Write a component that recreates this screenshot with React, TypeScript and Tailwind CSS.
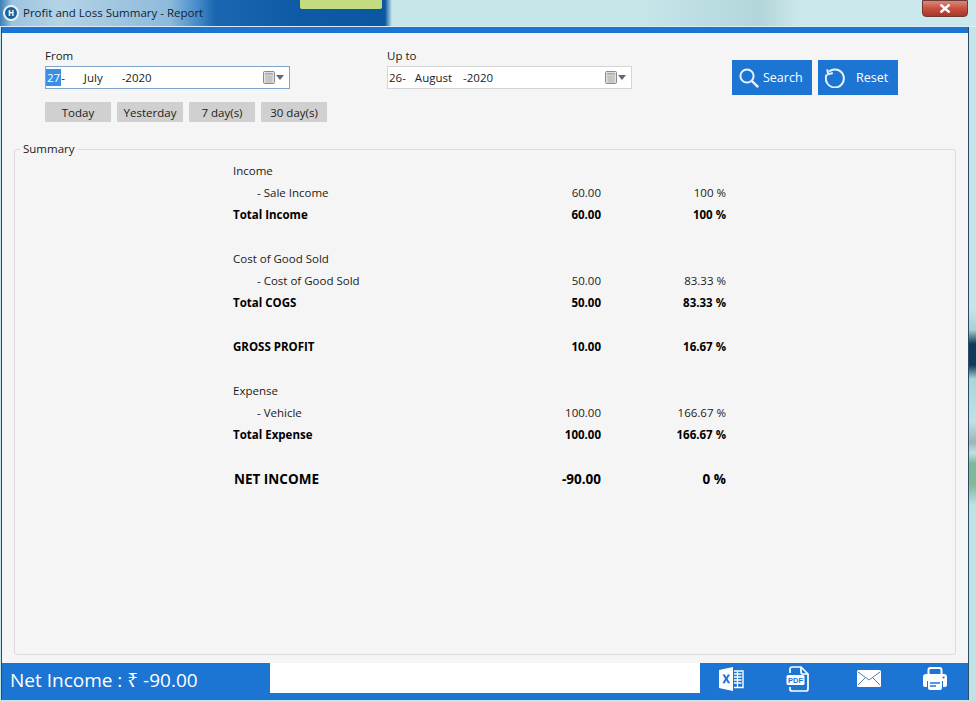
import React from "react";

type Row = { label?: string; amount?: string; pct?: string; kind?: "plain" | "sub" | "bold" | "net" };
const rows: Row[] = [
  { label: "Income" },
  { label: "- Sale Income", amount: "60.00", pct: "100 %", kind: "sub" },
  { label: "Total Income", amount: "60.00", pct: "100 %", kind: "bold" },
  {},
  { label: "Cost of Good Sold" },
  { label: "- Cost of Good Sold", amount: "50.00", pct: "83.33 %", kind: "sub" },
  { label: "Total COGS", amount: "50.00", pct: "83.33 %", kind: "bold" },
  {},
  { label: "GROSS PROFIT", amount: "10.00", pct: "16.67 %", kind: "bold" },
  {},
  { label: "Expense" },
  { label: "- Vehicle", amount: "100.00", pct: "166.67 %", kind: "sub" },
  { label: "Total Expense", amount: "100.00", pct: "166.67 %", kind: "bold" },
  {},
  { label: "NET INCOME", amount: "-90.00", pct: "0 %", kind: "net" },
];

function CalendarIcon() {
  return (
    <span className="flex items-center gap-[1px]">
      <svg width="12" height="13" viewBox="0 0 12 13">
        <rect x="0.5" y="0.5" width="11" height="12" rx="1" fill="#e2e2e2" stroke="#8a8a8a" />
        <rect x="2" y="2" width="8" height="1.5" fill="#a5a5a5" />
        <path d="M2 5h8M2 7h8M2 9h8M2 11h8M4 4.5v7M6 4.5v7M8 4.5v7" stroke="#b0b0b0" strokeWidth="0.7" />
      </svg>
      <svg width="8" height="5" viewBox="0 0 8 5">
        <path d="M0 0h8L4 5z" fill="#5b6b7a" />
      </svg>
    </span>
  );
}

function DateField({ children, border }: { children: React.ReactNode; border: string }) {
  return (
    <div className={`flex h-[23px] w-[245px] items-center justify-between border bg-white pr-[5px] text-[11.5px] text-[#222] ${border}`}>
      <div className="flex items-center">{children}</div>
      <CalendarIcon />
    </div>
  );
}

function QuickButton({ label }: { label: string }) {
  return (
    <button className="flex h-[20px] w-[66px] items-center justify-center bg-[#d0d0d0] pt-[1px] text-[11.5px] text-[#222]">
      {label}
    </button>
  );
}

function ExcelIcon() {
  return (
    <svg width="26" height="26" viewBox="0 0 26 26">
      <path d="M1 4 L15 1 V25 L1 22 Z" fill="#fff" />
      <path d="M4.5 8.5h2.4l1.4 2.8 1.5-2.8h2.3l-2.5 4.3 2.6 4.4h-2.4l-1.5-2.9-1.5 2.9H4.4l2.6-4.4z" fill="#1c75d2" />
      <path d="M16 5h9v16.5h-9" fill="none" stroke="#fff" strokeWidth="1.4" />
      <path d="M16 8h7.5M16 11h7.5M16 14h7.5M16 17h7.5M19.5 5.5v15.5" stroke="#fff" strokeWidth="1.3" />
    </svg>
  );
}

function PdfIcon() {
  return (
    <svg width="24" height="26" viewBox="0 0 24 26">
      <path d="M4 7V3a2 2 0 0 1 2-2h9l7 7v15a2 2 0 0 1-2 2H6a2 2 0 0 1-2-2v-2" fill="none" stroke="#fff" strokeWidth="1.7" />
      <path d="M15 1v5a2 2 0 0 0 2 2h5" fill="none" stroke="#fff" strokeWidth="1.7" />
      <rect x="0.5" y="9" width="18" height="10" rx="1.5" fill="#fff" />
      <text x="9.5" y="17" textAnchor="middle" fontSize="7.5" fontWeight="700" fontFamily="'Liberation Sans', sans-serif" fill="#1c75d2">PDF</text>
    </svg>
  );
}

function MailIcon() {
  return (
    <svg width="24" height="17" viewBox="0 0 24 17">
      <rect width="24" height="17" rx="1.5" fill="#fff" />
      <path d="M1 2l11 8 11-8M1 15l7.5-7.5M23 15l-7.5-7.5" fill="none" stroke="#3f6f9f" strokeWidth="0.9" />
    </svg>
  );
}

function PrintIcon() {
  return (
    <svg width="24" height="24" viewBox="0 0 24 24">
      <path d="M5.5 8V3a2 2 0 0 1 2-2h9a2 2 0 0 1 2 2v5" fill="none" stroke="#fff" strokeWidth="2" />
      <path d="M3 7h18a3 3 0 0 1 3 3v8a2 2 0 0 1-2 2h-2v-6H4v6H2a2 2 0 0 1-2-2v-8a3 3 0 0 1 3-3z" fill="#fff" />
      <circle cx="20.5" cy="10.5" r="1.1" fill="#1c75d2" />
      <path d="M6 13h12a1 1 0 0 1 1 1v7a2 2 0 0 1-2 2H7a2 2 0 0 1-2-2v-7a1 1 0 0 1 1-1z" fill="#fff" />
      <path d="M7 16h10M7 19h6" stroke="#1c75d2" strokeWidth="1.5" />
    </svg>
  );
}

export default function App() {
  return (
    <div className="flex h-[702px] w-[976px] flex-col overflow-hidden bg-[#c5e5e8] bg-[linear-gradient(180deg,#c3e4e8_0%,#c5e6e9_44%,#a8cfd2_47%,#0f3a58_49%,#0f3a58_52%,#a8d6d9_54%,#bfe2e4_60%,#9fb4b8_63%,#bfe2e4_64.5%,#7fb99a_66%,#7fb99a_69%,#bfe2e4_72%,#bfe2e4_100%)] bg-[length:7px_100%] bg-right bg-no-repeat font-['Open_Sans','Noto_Sans',sans-serif] text-[#1a1a1a]">
      {/* Title bar */}
      <div className="relative flex h-[27px] shrink-0 items-center justify-between border-b border-b-[#dcecf4] bg-[linear-gradient(90deg,#3a7fb8_0px,#9cc4de_12px,#b4d3e6_60px,#8dbadb_170px,#3f86c6_200px,#1b66b0_215px,#0f5aa5_300px,#0b57a2_385px,#c6e6ea_392px,#c6e6ea_640px,#b2d6da_760px,#cbe9ec_800px,#cbe9ec_976px)] pl-[3px] pr-[8px]">
        <div className="absolute left-[300px] top-0 h-[9px] w-[82px] rounded-b-[2px] bg-[#c3dc7f]" />
        <div className="flex items-center gap-[4px]">
          <span className="flex h-[16px] w-[16px] items-center justify-center rounded-full border-2 border-[#e5f1f8] bg-[#1f5f95] text-[8px] font-bold leading-none text-white">
            H
          </span>
          <span className="text-[11.5px] text-[#10233a]">Profit and Loss Summary - Report</span>
        </div>
        <div className="mb-[10px] flex h-[17px] w-[46px] items-center justify-center rounded-b-[4px] border border-[#6e3a34] bg-[linear-gradient(180deg,#d9897d_0%,#c9503f_50%,#a8362a_100%)]">
          <svg width="12" height="9" viewBox="0 0 12 9">
            <path d="M1.5 0.5L10.5 8.5M10.5 0.5L1.5 8.5" stroke="#fff" strokeWidth="2.4" />
          </svg>
        </div>
      </div>

      {/* Window */}
      <div className="ml-px flex min-h-0 w-[968px] flex-1 flex-col border-x border-x-[#2a4a66] bg-[#f5f5f5]">
        <div className="h-[6px] shrink-0 bg-[#1c75d2]" />

        {/* Filters */}
        <div className="flex h-[116px] shrink-0 pl-[43px] pt-[15px]">
          <div className="flex w-[342px] flex-col">
            <label className="h-[18px] text-[11.5px] leading-[16px]">From</label>
            <DateField border="border-[#7fa6c9]">
              <span className="bg-[#3a8ee6] px-px text-white">27</span>
              <span>-</span>
              <span className="ml-[19px]">July</span>
              <span className="ml-[19px]">-2020</span>
            </DateField>
            <div className="mt-[13px] flex gap-[6px]">
              <QuickButton label="Today" />
              <QuickButton label="Yesterday" />
              <QuickButton label="7 day(s)" />
              <QuickButton label="30 day(s)" />
            </div>
          </div>
          <div className="flex w-[345px] flex-col">
            <label className="h-[18px] text-[11.5px] leading-[16px]">Up to</label>
            <DateField border="border-[#d5d5d5]">
              <span className="pl-px">26-</span>
              <span className="ml-[9px]">August</span>
              <span className="ml-[11px]">-2020</span>
            </DateField>
          </div>
          <div className="mt-[12px] flex h-[35px] gap-[6px] text-white">
            <button className="flex w-[80px] items-center bg-[#1c75d2] pl-[7px] text-[12.5px]">
              <svg width="20" height="20" viewBox="0 0 20 20" fill="none" stroke="#e8f2fb">
                <circle cx="8" cy="8" r="6.6" strokeWidth="2" />
                <path d="M12.8 12.8L19.2 19.2" strokeWidth="2.4" />
              </svg>
              <span className="ml-[4px] pt-[2px]">Search</span>
            </button>
            <button className="flex w-[80px] items-center bg-[#1c75d2] pl-[7px] text-[12.5px]">
              <svg width="20" height="20" viewBox="0 0 20 20" fill="none" stroke="#e8f2fb" strokeWidth="2">
                <path d="M4 3.6A9 9 0 1 1 1.8 6.4" />
                <path d="M2.2 1.4 L3.2 6.2 L7.8 5" />
              </svg>
              <span className="ml-[11px] pt-[2px]">Reset</span>
            </button>
          </div>
        </div>

        {/* Summary */}
        <div className="relative mx-[12px] h-[506px] shrink-0 rounded-[3px] border border-[#dcdcdc] pl-[218px] pt-[10px]">
          <span className="absolute -top-[9px] left-[5px] bg-[#f5f5f5] px-[3px] text-[11.5px] leading-[16px]">Summary</span>
          <div className="w-[493px]">
            {rows.map((r, i) => (
              <div
                key={i}
                className={`flex h-[22px] items-center ${
                  r.kind === "bold"
                    ? "text-[11.5px] font-bold text-black"
                    : r.kind === "net"
                      ? "text-[13.5px] font-bold text-black"
                      : "text-[11.5px]"
                }`}
              >
                <span className={`flex-1 ${r.kind === "sub" ? "pl-[24px]" : r.kind === "net" ? "pl-[1px]" : ""}`}>{r.label}</span>
                <span className="w-[100px] text-right">{r.amount}</span>
                <span className="w-[125px] text-right">{r.pct}</span>
              </div>
            ))}
          </div>
        </div>

        <div className="h-[8px] shrink-0" />

        {/* Footer */}
        <div className="flex h-[37px] shrink-0 bg-[#1c75d2]">
          <div className="flex w-[268px] items-center pb-[3px] pl-[8px] text-[19px] leading-none text-white">
            Net Income : ₹ -90.00
          </div>
          <div className="h-[30px] w-[430px] bg-white" />
          <div className="flex flex-1 items-center pb-[6px] pl-[18px]">
            <ExcelIcon />
            <span className="ml-[42px] flex"><PdfIcon /></span>
            <span className="ml-[47px] flex"><MailIcon /></span>
            <span className="ml-[42px] flex"><PrintIcon /></span>
          </div>
        </div>
      </div>
      <div className="h-[2px] shrink-0" />
    </div>
  );
}
